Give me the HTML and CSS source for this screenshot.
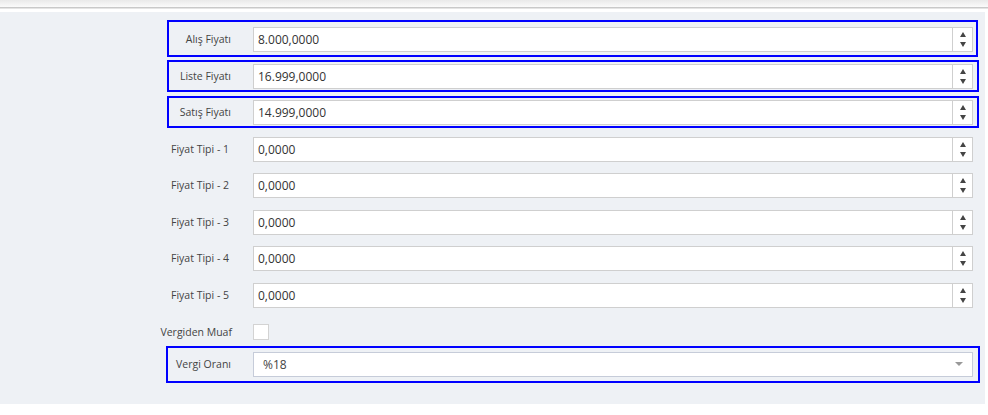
FILE: index.html
```html
<!DOCTYPE html>
<html lang="tr">
<head>
<meta charset="utf-8">
<title>Fiyat</title>
<link rel="stylesheet" href="styles.css">
</head>
<body>
<div class="topbar"></div>
<div class="panel">
  <div class="form">
    <div class="row hl hl-1">
      <div class="lbl">Alış Fiyatı</div>
      <div class="num"><div class="field">8.000,0000</div><div class="spin"><i class="up"></i><i class="down"></i></div></div>
    </div>
    <div class="row hl hl-2">
      <div class="lbl">Liste Fiyatı</div>
      <div class="num"><div class="field">16.999,0000</div><div class="spin"><i class="up"></i><i class="down"></i></div></div>
    </div>
    <div class="row hl hl-3">
      <div class="lbl">Satış Fiyatı</div>
      <div class="num"><div class="field">14.999,0000</div><div class="spin"><i class="up"></i><i class="down"></i></div></div>
    </div>
    <div class="row">
      <div class="lbl lbl-ft">Fiyat Tipi - 1</div>
      <div class="num"><div class="field">0,0000</div><div class="spin"><i class="up"></i><i class="down"></i></div></div>
    </div>
    <div class="row">
      <div class="lbl lbl-ft">Fiyat Tipi - 2</div>
      <div class="num"><div class="field">0,0000</div><div class="spin"><i class="up"></i><i class="down"></i></div></div>
    </div>
    <div class="row">
      <div class="lbl lbl-ft">Fiyat Tipi - 3</div>
      <div class="num"><div class="field">0,0000</div><div class="spin"><i class="up"></i><i class="down"></i></div></div>
    </div>
    <div class="row">
      <div class="lbl lbl-ft">Fiyat Tipi - 4</div>
      <div class="num"><div class="field">0,0000</div><div class="spin"><i class="up"></i><i class="down"></i></div></div>
    </div>
    <div class="row">
      <div class="lbl lbl-ft">Fiyat Tipi - 5</div>
      <div class="num"><div class="field">0,0000</div><div class="spin"><i class="up"></i><i class="down"></i></div></div>
    </div>
    <div class="row row-check">
      <div class="lbl lbl-wide">Vergiden Muaf</div>
      <div class="check"></div>
    </div>
    <div class="row row-select hl hl-4">
      <div class="lbl">Vergi Oranı</div>
      <div class="select"><span>%18</span><i class="caret"></i></div>
    </div>
  </div>
</div>
</body>
</html>
```
FILE: styles.css
```css
html, body {
  margin: 0;
  padding: 0;
  background: #fff;
  font-family: "Open Sans", "Liberation Sans", sans-serif;
  font-size: 12px;
  color: #333;
}

.topbar {
  height: 7px;
  background: linear-gradient(#e9e9e9, #fbfbfb);
  border-bottom: 1px solid #c9c9c9;
  box-shadow: 0 1px 0 #e4e4e4;
  margin-bottom: 4px;
}

.panel {
  width: 985px;
  height: 392px;
  background: #eef1f5;
  box-sizing: border-box;
  padding-top: 15px;
}

.form {
  display: flex;
  flex-direction: column;
  gap: 11.57px;
}

.row {
  position: relative;
  display: flex;
  align-items: center;
  height: 25px;
}

.lbl {
  width: 231px;
  padding-right: 22px;
  text-align: right;
  color: #444;
  flex: none;
  font-size: 10.5px;
  line-height: 25px;
}

.lbl-ft {
  width: 229px;
  padding-right: 24px;
}

.lbl-wide {
  width: 232px;
  padding-right: 21px;
}

.num {
  width: 720px;
  height: 25px;
  display: flex;
  background: #fff;
  border: 1px solid #cfcfcf;
  box-sizing: border-box;
}

.field {
  flex: 1;
  padding-left: 4px;
  line-height: 23px;
  color: #333;
}

.spin {
  width: 19px;
  border-left: 1px solid #cfcfcf;
  display: flex;
  flex-direction: column;
  align-items: center;
  justify-content: center;
  gap: 5px;
}

.spin .up {
  width: 0;
  height: 0;
  border-left: 3px solid transparent;
  border-right: 3px solid transparent;
  border-bottom: 5px solid #444;
}

.spin .down {
  width: 0;
  height: 0;
  border-left: 3px solid transparent;
  border-right: 3px solid transparent;
  border-top: 5px solid #444;
}

.row-check {
  margin-top: 0.43px;
}

.check {
  width: 16px;
  height: 16px;
  box-sizing: border-box;
  border: 1px solid #d3d3d3;
  background: #fff;
}

.row-select {
  margin-top: -4.57px;
}

.select {
  width: 720px;
  height: 25px;
  box-sizing: border-box;
  border: 1px solid #c6ccd9;
  background: #fff;
  display: flex;
  align-items: center;
  justify-content: space-between;
  padding: 0 9px 0 9px;
  color: #444;
}

.caret {
  width: 0;
  height: 0;
  border-left: 4px solid transparent;
  border-right: 4px solid transparent;
  border-top: 4px solid #999;
}

.hl::after {
  content: "";
  position: absolute;
  border: 2px solid #0000ff;
  pointer-events: none;
}

.hl-1::after { left: 167px; top: -7px; width: 807px; height: 33px; }
.hl-2::after { left: 167px; top: -4px; width: 808px; height: 28px; }
.hl-3::after { left: 167px; top: -4px; width: 808px; height: 28px; }
.hl-4::after { left: 166px; top: -6px; width: 810px; height: 33px; }
```
